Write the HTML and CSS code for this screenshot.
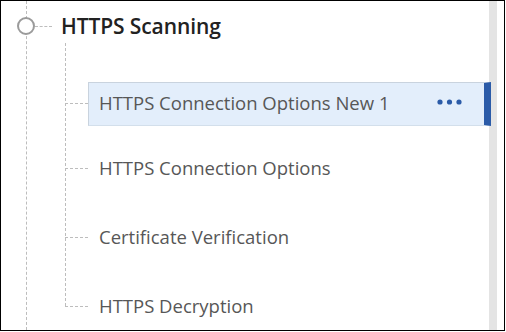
FILE: index.html
```html
<!DOCTYPE html>
<html lang="en">

<head>
    <meta charset="UTF-8" />
    <title>HTTPS Scanning</title>
    <link rel="stylesheet" href="styles.css">
</head>

<body>
    <div class="frame">
        <div class="tree">
            <div class="tree-root">
                <span class="root-dot"></span>
                <span class="root-link"></span>
                <h1 class="root-title">HTTPS Scanning</h1>
            </div>

            <ul class="children">
                <li class="child child-selected">
                    <div class="node node-selected">
                        <span class="node-label">HTTPS Connection Options New 1</span>
                        <svg class="node-menu" width="25" height="6" viewBox="0 0 25 6">
                            <circle cx="3" cy="3" r="2.6" />
                            <circle cx="12.5" cy="3" r="2.6" />
                            <circle cx="22" cy="3" r="2.6" />
                        </svg>
                    </div>
                </li>
                <li class="child">
                    <div class="node">
                        <span class="node-label">HTTPS Connection Options</span>
                    </div>
                </li>
                <li class="child">
                    <div class="node">
                        <span class="node-label">Certificate Verification</span>
                    </div>
                </li>
                <li class="child">
                    <div class="node">
                        <span class="node-label">HTTPS Decryption</span>
                    </div>
                </li>
            </ul>
        </div>
        <div class="scrollbar"></div>
    </div>
</body>

</html>
```

FILE: styles.css
```css
:root {
    --text-dark: #222222;
    --text-muted: #575757;
    --line: #bdbdbd;
    --circle: #9b9b9b;
    --selected-bg: #e3eefb;
    --selected-border: #c9d3de;
    --accent: #2b5ba8;
    --track: #e4e4e4;
}

* {
    margin: 0;
    padding: 0;
    box-sizing: border-box;
}

body {
    font-family: 'Open Sans', 'Noto Sans', sans-serif;
    background-color: white;
}

.frame {
    width: 505px;
    height: 331px;
    border: 1px solid #000;
    display: flex;
    overflow: hidden;
    background-color: white;
}

.tree {
    position: relative;
    flex: 1;
}

/* the long trunk line on the left */
.tree::before {
    content: '';
    position: absolute;
    left: 25px;
    top: 0;
    bottom: 0;
    border-left: 1px dashed var(--line);
}

.tree-root {
    display: flex;
    align-items: center;
    height: 18px;
    margin-top: 16px;
    padding-left: 16px;
}

.root-dot {
    position: relative;
    z-index: 1;
    width: 18px;
    height: 18px;
    border: 2px solid var(--circle);
    border-radius: 50%;
    background-color: white;
    flex-shrink: 0;
}

.root-link {
    width: 17px;
    border-top: 1px dashed var(--line);
    margin-right: 9px;
}

.root-title {
    font-size: 21px;
    font-weight: 600;
    line-height: 1;
    color: var(--text-dark);
    letter-spacing: -0.1px;
}

.children {
    list-style: none;
    position: relative;
    margin-left: 64px;
    margin-top: 8px;
    padding-top: 39px;
    display: flex;
    flex-direction: column;
    gap: 25px;
}

.children::before {
    content: '';
    position: absolute;
    left: 0;
    top: 0;
    bottom: 23px;
    border-left: 1px dashed var(--line);
}

.child {
    display: flex;
    align-items: center;
}

.child-selected {
    margin-bottom: -4px;
}

.child::before {
    content: '';
    width: 23px;
    border-top: 1px dashed var(--line);
    flex-shrink: 0;
    margin-top: -2px;
}

.node {
    flex: 1;
    height: 44px;
    display: flex;
    align-items: center;
    padding-left: 11px;
    padding-right: 23px;
    padding-bottom: 4px;
}

.node-label {
    flex: 1;
    font-size: 18.5px;
    color: var(--text-muted);
    white-space: nowrap;
}

.node-selected {
    position: relative;
    z-index: 1;
    margin-right: -2px;
    padding-left: 10px;
    padding-right: 22px;
    background-color: var(--selected-bg);
    border: 1px solid var(--selected-border);
    border-bottom-color: #d3dfeb;
    border-right: 7px solid var(--accent);
}

.node-menu {
    fill: var(--accent);
    flex-shrink: 0;
}

.scrollbar {
    width: 8px;
    margin-right: 7px;
    background-color: var(--track);
}
```
